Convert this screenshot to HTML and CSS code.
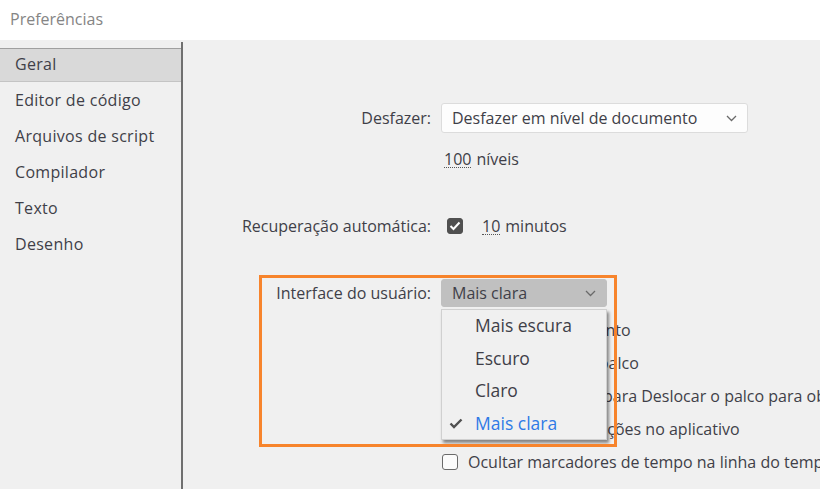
FILE: index.html
```html
<!DOCTYPE html>
<html lang="pt-BR">
<head>
<meta charset="utf-8">
<title>Preferências</title>
<link rel="stylesheet" href="styles.css">
</head>
<body>
<div class="window">
  <header class="titlebar">Preferências</header>
  <div class="body">
    <nav class="sidebar">
      <div class="nav-item active">Geral</div>
      <div class="nav-item">Editor de código</div>
      <div class="nav-item">Arquivos de script</div>
      <div class="nav-item">Compilador</div>
      <div class="nav-item">Texto</div>
      <div class="nav-item">Desenho</div>
    </nav>
    <main class="content">
      <div class="row row-undo">
        <label class="label">Desfazer:</label>
        <div class="select">
          <span>Desfazer em nível de documento</span>
          <svg class="chev" width="11" height="7" viewBox="0 0 11 7"><path d="M1 1 L5.5 5.5 L10 1" fill="none" stroke="#6a6a6a" stroke-width="1.3"/></svg>
        </div>
      </div>
      <div class="row row-levels">
        <span class="label"></span>
        <div class="field"><span class="num">100</span> níveis</div>
      </div>
      <div class="row row-auto">
        <label class="label">Recuperação automática:</label>
        <div class="field">
          <span class="check checked"><svg width="12" height="10" viewBox="0 0 12 10"><path d="M1.5 5 L4.5 8 L10.5 1.5" fill="none" stroke="#fff" stroke-width="2"/></svg></span>
          <span class="num">10</span> minutos
        </div>
      </div>
      <div class="row row-ui">
        <label class="label">Interface do usuário:</label>
        <div class="select select-open">
          <span>Mais clara</span>
          <svg class="chev" width="11" height="7" viewBox="0 0 11 7"><path d="M1 1 L5.5 5.5 L10 1" fill="none" stroke="#6a6a6a" stroke-width="1.3"/></svg>
          <ul class="menu">
            <li>Mais escura</li>
            <li>Escuro</li>
            <li>Claro</li>
            <li class="selected"><svg class="tick" width="14" height="11" viewBox="0 0 14 11"><path d="M1.5 5.5 L5 9 L12.5 1.5" fill="none" stroke="#505050" stroke-width="2.4"/></svg>Mais clara</li>
          </ul>
        </div>
      </div>
      <div class="row row-opt">
        <span class="label"></span>
        <div class="field"><span class="check"></span><span class="opt-text">Ativar sombreamento</span></div>
      </div>
      <div class="row row-opt">
        <span class="label"></span>
        <div class="field"><span class="check"></span><span class="opt-text">Redimensionar o palco</span></div>
      </div>
      <div class="row row-opt">
        <span class="label"></span>
        <div class="field"><span class="check"></span><span class="opt-text">Usar tecla Espaço para Deslocar o palco para objetos</span></div>
      </div>
      <div class="row row-opt">
        <span class="label"></span>
        <div class="field"><span class="check"></span><span class="opt-text">Mostrar as notificações no aplicativo</span></div>
      </div>
      <div class="row row-opt">
        <span class="label"></span>
        <div class="field"><span class="check"></span><span class="opt-text">Ocultar marcadores de tempo na linha do tempo</span></div>
      </div>
      <div class="highlight"></div>
    </main>
  </div>
</div>
</body>
</html>
```

FILE: styles.css
```css
* { box-sizing: border-box; }
html, body {
  margin: 0;
  padding: 0;
  width: 820px;
  height: 489px;
  overflow: hidden;
}
body {
  font-family: "Open Sans", "Noto Sans", sans-serif;
  font-size: 16px;
  color: #3f3f48;
  background: #f0f0f0;
}
.window {
  display: flex;
  flex-direction: column;
  width: 820px;
  height: 489px;
  overflow: hidden;
}
.titlebar {
  height: 40px;
  background: #ffffff;
  color: #858585;
  padding-left: 10px;
  line-height: 38px;
  flex: none;
}
.body {
  flex: 1;
  display: flex;
  min-height: 0;
}
.sidebar {
  width: 183px;
  flex: none;
  margin-top: 2px;
  padding-top: 6px;
  border-right: 2px solid #6f6f6f;
}
.nav-item {
  height: 34px;
  margin-bottom: 2px;
  line-height: 33px;
  padding-left: 15px;
  white-space: nowrap;
  letter-spacing: 0.3px;
}
.nav-item.active {
  background: #d9d9d9;
  border-top: 1px solid #a0a0a0;
  border-bottom: 1px solid #c4c4c4;
  line-height: 31px;
}
.content {
  position: relative;
  flex: 1;
  padding-top: 63px;
  display: flex;
  flex-direction: column;
  min-width: 0;
  overflow: hidden;
}
.row {
  display: grid;
  grid-template-columns: 248px 1fr;
  column-gap: 10px;
  align-items: center;
  white-space: nowrap;
}
.label {
  text-align: right;
}
.select {
  position: relative;
  display: flex;
  align-items: center;
  justify-content: space-between;
  background: #fdfdfd;
  border: 1px solid #dcdcdc;
  border-radius: 3px;
  padding: 0 10px 0 10px;
}
.row-undo .select {
  width: 307px;
  height: 30px;
}
.row-levels {
  margin-top: 15px;
  height: 20px;
}
.row-levels .field { padding-left: 3px; }
.num {
  border-bottom: 1px dotted #555;
  line-height: 16px;
  display: inline-block;
}
.row-auto {
  margin-top: 47px;
  height: 20px;
}
.field {
  display: flex;
  align-items: center;
  gap: 5px;
}
.row-auto .field { padding-left: 6px; }
.check {
  width: 16px;
  height: 16px;
  border: 1.5px solid #6a6a6a;
  border-radius: 3px;
  background: #fbfbfb;
  display: inline-flex;
  align-items: center;
  justify-content: center;
  flex: none;
}
.check.checked {
  background: #505050;
  border-color: #505050;
  margin-right: 14px;
}
.row-ui {
  margin-top: 44px;
}
.row-ui .select {
  width: 166px;
  height: 28px;
  background: #c0c0c0;
  border-color: #c0c0c0;
}
.menu {
  position: absolute;
  left: -1px;
  top: 29px;
  width: 166px;
  height: 131px;
  margin: 0;
  padding: 0;
  list-style: none;
  background: #f0f0f0;
  border: 1px solid #d0d0d0;
  box-shadow: 2px 3px 3px rgba(0, 0, 0, 0.45);
  font-size: 17.5px;
  z-index: 2;
}
.menu li {
  position: relative;
  height: 32.5px;
  line-height: 30px;
  padding-left: 33px;
  color: #3f3f48;
}
.menu li.selected {
  color: #2f7ae6;
}
.tick {
  position: absolute;
  left: 7px;
  top: 10px;
}
.row-opt {
  height: 33px;
}
.row-ui + .row-opt { margin-top: 6px; }
.row-opt .field {
  gap: 10px;
  padding-left: 1px;
}
.highlight {
  position: absolute;
  left: 76px;
  top: 235px;
  width: 358px;
  height: 172px;
  border: 3px solid #f7842c;
  z-index: 3;
  pointer-events: none;
}
```
